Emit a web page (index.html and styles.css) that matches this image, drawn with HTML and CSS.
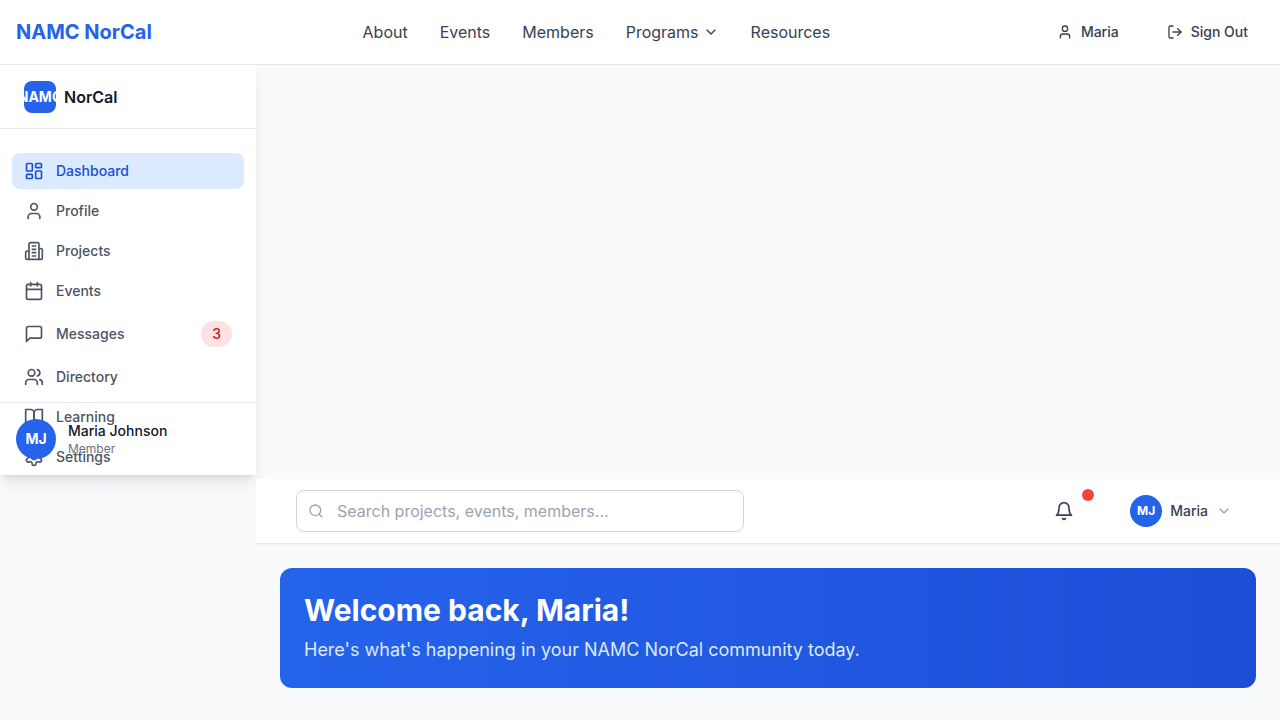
FILE: index.html
```html
<!DOCTYPE html>
<html lang="en">
<head>
<meta charset="utf-8">
<meta name="viewport" content="width=device-width, initial-scale=1">
<title>NAMC NorCal</title>
<link rel="stylesheet" href="styles.css">
</head>
<body>
<svg class="sprite" aria-hidden="true">
  <symbol id="user" viewBox="0 0 24 24"><path d="M19 21v-2a4 4 0 0 0-4-4H9a4 4 0 0 0-4 4v2"/><circle cx="12" cy="7" r="4"/></symbol>
  <symbol id="chevron" viewBox="0 0 24 24"><path d="m6 9 6 6 6-6"/></symbol>
  <symbol id="logout" viewBox="0 0 24 24"><path d="M9 21H5a2 2 0 0 1-2-2V5a2 2 0 0 1 2-2h4"/><path d="m16 17 5-5-5-5"/><path d="M21 12H9"/></symbol>
  <symbol id="dashboard" viewBox="0 0 24 24"><rect width="7" height="9" x="3" y="3" rx="1"/><rect width="7" height="5" x="14" y="3" rx="1"/><rect width="7" height="9" x="14" y="12" rx="1"/><rect width="7" height="5" x="3" y="16" rx="1"/></symbol>
  <symbol id="building" viewBox="0 0 24 24"><path d="M6 22V4a2 2 0 0 1 2-2h8a2 2 0 0 1 2 2v18Z"/><path d="M6 12H4a2 2 0 0 0-2 2v6a2 2 0 0 0 2 2h2"/><path d="M18 9h2a2 2 0 0 1 2 2v9a2 2 0 0 1-2 2h-2"/><path d="M10 6h4M10 10h4M10 14h4M10 18h4"/></symbol>
  <symbol id="calendar" viewBox="0 0 24 24"><path d="M8 2v4M16 2v4"/><rect width="18" height="18" x="3" y="4" rx="2"/><path d="M3 10h18"/></symbol>
  <symbol id="message" viewBox="0 0 24 24"><path d="M21 15a2 2 0 0 1-2 2H7l-4 4V5a2 2 0 0 1 2-2h14a2 2 0 0 1 2 2z"/></symbol>
  <symbol id="users" viewBox="0 0 24 24"><path d="M16 21v-2a4 4 0 0 0-4-4H6a4 4 0 0 0-4 4v2"/><circle cx="9" cy="7" r="4"/><path d="M22 21v-2a4 4 0 0 0-3-3.87"/><path d="M16 3.13a4 4 0 0 1 0 7.75"/></symbol>
  <symbol id="book" viewBox="0 0 24 24"><path d="M2 3h6a4 4 0 0 1 4 4v14a3 3 0 0 0-3-3H2z"/><path d="M22 3h-6a4 4 0 0 0-4 4v14a3 3 0 0 1 3-3h7z"/></symbol>
  <symbol id="settings" viewBox="0 0 24 24"><path d="M12.22 2h-.44a2 2 0 0 0-2 2v.18a2 2 0 0 1-1 1.73l-.43.25a2 2 0 0 1-2 0l-.15-.08a2 2 0 0 0-2.73.73l-.22.38a2 2 0 0 0 .73 2.73l.15.1a2 2 0 0 1 1 1.72v.51a2 2 0 0 1-1 1.74l-.15.09a2 2 0 0 0-.73 2.73l.22.38a2 2 0 0 0 2.73.73l.15-.08a2 2 0 0 1 2 0l.43.25a2 2 0 0 1 1 1.73V20a2 2 0 0 0 2 2h.44a2 2 0 0 0 2-2v-.18a2 2 0 0 1 1-1.73l.43-.25a2 2 0 0 1 2 0l.15.08a2 2 0 0 0 2.73-.73l.22-.39a2 2 0 0 0-.73-2.73l-.15-.08a2 2 0 0 1-1-1.74v-.5a2 2 0 0 1 1-1.74l.15-.09a2 2 0 0 0 .73-2.73l-.22-.38a2 2 0 0 0-2.73-.73l-.15.08a2 2 0 0 1-2 0l-.43-.25a2 2 0 0 1-1-1.73V4a2 2 0 0 0-2-2z"/><circle cx="12" cy="12" r="3"/></symbol>
  <symbol id="search" viewBox="0 0 24 24"><circle cx="11" cy="11" r="8"/><path d="m21 21-4.3-4.3"/></symbol>
  <symbol id="bell" viewBox="0 0 24 24"><path d="M6 8a6 6 0 0 1 12 0c0 7 3 9 3 9H3s3-2 3-9"/><path d="M10.3 21a1.94 1.94 0 0 0 3.4 0"/></symbol>
</svg>

<header class="site-header">
  <a class="site-logo" href="#">NAMC NorCal</a>
  <nav class="site-nav" aria-label="Site">
    <a href="#">About</a>
    <a href="#">Events</a>
    <a href="#">Members</a>
    <button type="button">Programs <svg class="icon icon-sm"><use href="#chevron"/></svg></button>
    <a href="#">Resources</a>
  </nav>
  <div class="site-actions">
    <a class="action" href="#"><svg class="icon icon-sm"><use href="#user"/></svg>Maria</a>
    <button class="action" type="button"><svg class="icon icon-sm"><use href="#logout"/></svg>Sign Out</button>
  </div>
</header>

<aside class="sidebar">
  <div class="brand"><span class="brand-mark">NAMC</span><span class="brand-name">NorCal</span></div>
  <nav class="side-nav" aria-label="Member">
    <a class="side-link active" href="#" aria-current="page"><svg class="icon"><use href="#dashboard"/></svg>Dashboard</a>
    <a class="side-link" href="#"><svg class="icon"><use href="#user"/></svg>Profile</a>
    <a class="side-link" href="#"><svg class="icon"><use href="#building"/></svg>Projects</a>
    <a class="side-link" href="#"><svg class="icon"><use href="#calendar"/></svg>Events</a>
    <a class="side-link" href="#"><svg class="icon"><use href="#message"/></svg>Messages<span class="badge">3</span></a>
    <a class="side-link" href="#"><svg class="icon"><use href="#users"/></svg>Directory</a>
    <a class="side-link" href="#"><svg class="icon"><use href="#book"/></svg>Learning</a>
    <a class="side-link" href="#"><svg class="icon"><use href="#settings"/></svg>Settings</a>
  </nav>
  <div class="profile">
    <span class="avatar avatar-lg">MJ</span>
    <div>
      <p class="profile-name">Maria Johnson</p>
      <p class="profile-role">Member</p>
    </div>
  </div>
</aside>

<div class="content">
  <header class="toolbar">
    <div class="search">
      <svg class="icon icon-sm search-icon"><use href="#search"/></svg>
      <input type="search" aria-label="Search" placeholder="Search projects, events, members...">
    </div>
    <div class="toolbar-actions">
      <button class="bell" type="button" aria-label="Notifications"><svg class="icon"><use href="#bell"/></svg><span class="dot"></span></button>
      <button class="account" type="button"><span class="avatar">MJ</span>Maria<svg class="icon icon-sm muted"><use href="#chevron"/></svg></button>
    </div>
  </header>
  <main class="main">
    <section class="welcome">
      <h1>Welcome back, Maria!</h1>
      <p>Here's what's happening in your NAMC NorCal community today.</p>
    </section>
  </main>
</div>
</body>
</html>
```
FILE: styles.css
```css
* {
  box-sizing: border-box;
}

body {
  margin: 0;
  background: #f9fafb;
  color: #111827;
  font-family: Inter, "Liberation Sans", sans-serif;
  font-size: 16px;
  line-height: 24px;
  -webkit-font-smoothing: antialiased;
}

a {
  color: inherit;
  text-decoration: none;
}

button {
  padding: 0;
  border: 0;
  background: none;
  color: inherit;
  font: inherit;
  cursor: pointer;
}

h1,
p {
  margin: 0;
}

.sprite {
  display: none;
}

.icon {
  flex: none;
  width: 20px;
  height: 20px;
  fill: none;
  stroke: currentColor;
  stroke-width: 2;
  stroke-linecap: round;
  stroke-linejoin: round;
}

.icon-sm {
  width: 16px;
  height: 16px;
}

.muted {
  color: #9ca3af;
}

.site-header {
  display: flex;
  align-items: center;
  justify-content: space-between;
  height: 65px;
  padding: 0 16px;
  border-bottom: 1px solid #e5e7eb;
  background: #fff;
  position: relative;
  z-index: 3;
}

.site-logo {
  color: #2563eb;
  font-size: 20px;
  font-weight: 700;
  line-height: 28px;
}

.site-nav {
  display: flex;
  align-items: center;
  gap: 32px;
  color: #374151;
}

.site-nav button {
  display: flex;
  align-items: center;
  gap: 4px;
}

.site-actions {
  display: flex;
  gap: 16px;
}

.action {
  display: flex;
  align-items: center;
  gap: 8px;
  padding: 8px 16px;
  color: #374151;
  font-size: 14px;
  font-weight: 500;
  line-height: 20px;
}

button.action {
  padding: 8px 16px;
  font-size: 14px;
  font-weight: 500;
}

.sidebar {
  position: relative;
  z-index: 1;
  width: 256px;
  margin-bottom: 4px;
  background: #fff;
  box-shadow: 0 10px 15px -3px rgba(0, 0, 0, 0.1), 0 4px 6px -4px rgba(0, 0, 0, 0.1);
}

.brand {
  display: flex;
  align-items: center;
  gap: 8px;
  height: 64px;
  padding: 0 24px;
  border-bottom: 1px solid #e5e7eb;
}

.brand-mark {
  display: flex;
  align-items: center;
  justify-content: center;
  width: 32px;
  height: 32px;
  overflow: hidden;
  border-radius: 8px;
  background: #2563eb;
  color: #fff;
  font-size: 14px;
  font-weight: 700;
}

.brand-name {
  font-weight: 600;
}

.side-nav {
  display: flex;
  flex-direction: column;
  gap: 4px;
  padding: 24px 12px 0;
}

.side-link {
  display: flex;
  align-items: center;
  gap: 12px;
  padding: 8px 12px;
  border-radius: 8px;
  color: #4b5563;
  font-size: 14px;
  font-weight: 500;
  line-height: 20px;
}

.side-link.active {
  background: #dbeafe;
  color: #1d4ed8;
}

.badge {
  margin-left: auto;
  padding: 3px 11px;
  border-radius: 13px;
  background: #fee2e2;
  color: #b91c1c;
}

.profile {
  position: absolute;
  right: 0;
  bottom: 0;
  left: 0;
  display: flex;
  align-items: center;
  gap: 12px;
  padding: 16px;
  border-top: 1px solid #e5e7eb;
}

.profile-name {
  font-size: 14px;
  font-weight: 500;
  line-height: 20px;
}

.profile-role {
  color: #6b7280;
  font-size: 12px;
  line-height: 16px;
}

.avatar {
  display: flex;
  align-items: center;
  justify-content: center;
  flex: none;
  width: 32px;
  height: 32px;
  border-radius: 50%;
  background: #2563eb;
  color: #fff;
  font-size: 12px;
  font-weight: 700;
}

.avatar-lg {
  width: 40px;
  height: 40px;
  font-size: 14px;
}

.content {
  padding-left: 256px;
}

.toolbar {
  position: relative;
  z-index: 2;
  display: flex;
  align-items: center;
  justify-content: space-between;
  height: 65px;
  padding: 0 40px;
  border-bottom: 1px solid #e5e7eb;
  background: #fff;
  box-shadow: 0 1px 2px rgba(0, 0, 0, 0.05);
}

.search {
  position: relative;
  flex: 0 1 448px;
}

.search input {
  display: block;
  width: 100%;
  height: 42px;
  padding: 8px 16px 8px 40px;
  border: 1px solid #d1d5db;
  border-radius: 8px;
  background: #fff;
  color: inherit;
  font: inherit;
  appearance: none;
}

.search input::placeholder {
  color: #9ca3af;
}

.search-icon {
  position: absolute;
  top: 13px;
  left: 12px;
  color: #9ca3af;
}

.toolbar-actions {
  display: flex;
  align-items: center;
  gap: 32px;
  color: #374151;
}

.bell {
  position: relative;
  display: flex;
  padding: 8px 16px;
}

.dot {
  position: absolute;
  top: -4px;
  right: -4px;
  width: 12px;
  height: 12px;
  border-radius: 50%;
  background: #ef4444;
}

.account {
  display: flex;
  align-items: center;
  gap: 8px;
  padding: 0 8px;
  font-size: 14px;
  font-weight: 500;
  line-height: 20px;
}

.main {
  padding: 24px 24px 32px;
}

.welcome {
  padding: 24px;
  border-radius: 12px;
  background: linear-gradient(to right, #2563eb, #1d4ed8);
  color: #fff;
}

.welcome h1 {
  margin-bottom: 8px;
  font-size: 30px;
  font-weight: 700;
  line-height: 36px;
}

.welcome p {
  color: #dbeafe;
  font-size: 18px;
  line-height: 28px;
}
```
